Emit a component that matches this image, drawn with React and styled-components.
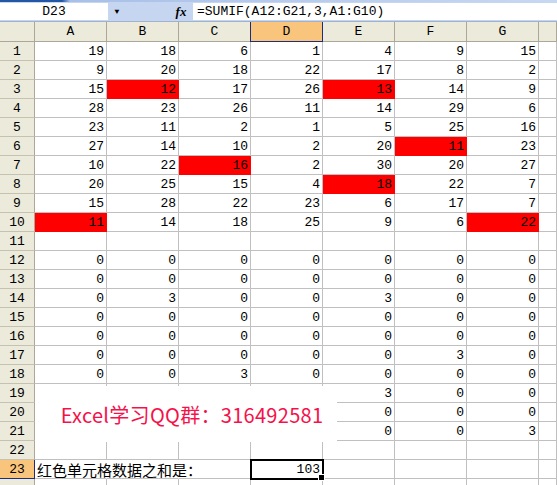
import React from 'react'
import styled, { createGlobalStyle } from 'styled-components'

const GlobalStyle = createGlobalStyle`
  html, body {
    margin: 0;
    padding: 0;
    background: #fff;
  }
  body {
    font-family: "Liberation Mono", "Noto Sans CJK SC", monospace;
    overflow: hidden;
  }
`

const COLS = ['A', 'B', 'C', 'D', 'E', 'F', 'G']

// rows 19-21 A:D sit under the banner, so only E:G are given
const DATA = {
  1: [19, 18, 6, 1, 4, 9, 15],
  2: [9, 20, 18, 22, 17, 8, 2],
  3: [15, 12, 17, 26, 13, 14, 9],
  4: [28, 23, 26, 11, 14, 29, 6],
  5: [23, 11, 2, 1, 5, 25, 16],
  6: [27, 14, 10, 2, 20, 11, 23],
  7: [10, 22, 16, 2, 30, 20, 27],
  8: [20, 25, 15, 4, 18, 22, 7],
  9: [15, 28, 22, 23, 6, 17, 7],
  10: [11, 14, 18, 25, 9, 6, 22],
  12: [0, 0, 0, 0, 0, 0, 0],
  13: [0, 0, 0, 0, 0, 0, 0],
  14: [0, 3, 0, 0, 3, 0, 0],
  15: [0, 0, 0, 0, 0, 0, 0],
  16: [0, 0, 0, 0, 0, 0, 0],
  17: [0, 0, 0, 0, 0, 3, 0],
  18: [0, 0, 3, 0, 0, 0, 0],
  19: ['', '', '', '', 3, 0, 0],
  20: ['', '', '', '', 0, 0, 0],
  21: ['', '', '', '', 0, 0, 3],
}

// cells filled red: "row-colIndex"
const RED = new Set(['3-1', '3-4', '6-5', '7-2', '8-4', '10-0', '10-6'])

const Page = styled.div`
  width: 557px;
  height: 485px;
  overflow: hidden;
  background: #fff;
`

const TopStrip = styled.div`
  height: 2px;
  background: linear-gradient(to right, #2456a6 0, #2456a6 62px, #a8c0e8 70px, #c9d8f1 100%);
`

const FormulaBar = styled.div`
  height: 20px;
  display: flex;
  align-items: stretch;
  background: #c6d6f0;
  border-bottom: 1px solid #9fb2d0;
  box-sizing: border-box;
  font-size: 13px;
  color: #000;
`

const NameBox = styled.div`
  width: 108px;
  background: #fff;
  display: flex;
  align-items: center;
  justify-content: center;
  margin-top: 1px;
  margin-bottom: 1px;
`

const DropArrow = styled.div`
  width: 18px;
  display: flex;
  align-items: center;
  justify-content: center;
  font-size: 8px;
  color: #000;
`

const Fx = styled.div`
  margin-left: auto;
  width: 24px;
  display: flex;
  align-items: center;
  justify-content: center;
  font-family: "Liberation Serif", serif;
  font-style: italic;
  font-weight: bold;
  font-size: 13px;
`

const FormulaInput = styled.div`
  width: 364px;
  background: #fff;
  display: flex;
  align-items: center;
  padding-left: 4px;
  box-sizing: border-box;
  margin-top: 1px;
  margin-bottom: 1px;
  font-size: 13px;
`

const Sheet = styled.div`
  position: relative;
  display: grid;
  grid-template-columns: 35px repeat(7, 72px) 1fr;
  grid-template-rows: 20px;
  grid-auto-rows: 19px;
`

const Corner = styled.div`
  background: #ebeadb;
  border-right: 1px solid #aca899;
  border-bottom: 1px solid #aca899;
`

const ColHead = styled.div`
  box-sizing: border-box;
  display: flex;
  align-items: center;
  justify-content: center;
  font-size: 13px;
  background: ${p => (p.$active ? '#f9c57c' : '#ebeadb')};
  border-right: 1px solid ${p => (p.$active ? '#1c2d7a' : '#aca899')};
  border-left: ${p => (p.$active ? '1px solid #1c2d7a' : 'none')};
  border-bottom: 1px solid ${p => (p.$active ? '#1c2d7a' : '#aca899')};
  margin-left: ${p => (p.$active ? '-1px' : '0')};
`

const RowHead = styled.div`
  box-sizing: border-box;
  display: flex;
  align-items: center;
  justify-content: center;
  font-size: 13px;
  background: ${p => (p.$active ? '#f9c57c' : '#ebeadb')};
  border-right: 1px solid ${p => (p.$active ? '#1c2d7a' : '#aca899')};
  border-bottom: 1px solid ${p => (p.$active ? '#1c2d7a' : '#c5c2b2')};
`

const Cell = styled.div`
  position: relative;
  box-sizing: border-box;
  display: flex;
  align-items: center;
  justify-content: ${p => (p.$left ? 'flex-start' : 'flex-end')};
  padding: ${p => (p.$left ? '0 0 0 2px' : '0 2px 0 0')};
  font-size: 13px;
  white-space: nowrap;
  overflow: visible;
  background: ${p => (p.$red ? '#ff0000' : '#fff')};
  border-right: 1px solid ${p => (p.$red ? '#ff0000' : p.$noRight ? 'transparent' : '#c0c0c0')};
  border-bottom: 1px solid ${p => (p.$red ? '#ff0000' : '#c0c0c0')};
  ${p => p.$selected && `
    outline: 2px solid #000;
    outline-offset: -1px;
    z-index: 2;
    &::after {
      content: '';
      position: absolute;
      right: -3px;
      bottom: -3px;
      width: 5px;
      height: 5px;
      background: #000;
      border: 1px solid #fff;
    }
  `}
`

const ChineseText = styled.span`
  font-family: "Noto Sans CJK SC", sans-serif;
  font-size: 15px;
  position: relative;
  z-index: 1;
`

const Banner = styled.div`
  position: absolute;
  left: 35px;
  top: 364px;
  width: 302px;
  height: 56px;
  background: #fff;
  display: flex;
  align-items: center;
  justify-content: center;
  padding-left: 12px;
  box-sizing: border-box;
  font-family: "Noto Sans CJK SC", sans-serif;
  font-size: 20px;
  color: #f5124a;
  letter-spacing: 0.3px;
  z-index: 3;
`

function App() {
  const rows = []
  for (let r = 1; r <= 24; r++) {
    const vals = DATA[r]
    rows.push(
      <RowHead key={`h${r}`} $active={r === 23}>{r < 24 ? r : ''}</RowHead>
    )
    COLS.forEach((c, ci) => {
      let content = vals ? vals[ci] : ''
      let props = {}
      if (r === 23) {
        if (ci === 0) {
          content = <ChineseText>红色单元格数据之和是：</ChineseText>
          props = { $left: true, $noRight: true }
        } else if (ci === 1 || ci === 2) {
          content = ''
          props = { $noRight: ci === 1 }
        } else if (ci === 3) {
          content = 103
          props = { $selected: true }
        } else {
          content = ''
        }
      }
      rows.push(
        <Cell key={`${r}-${c}`} $red={RED.has(`${r}-${ci}`)} {...props}>
          {content}
        </Cell>
      )
    })
    rows.push(<Cell key={`${r}-H`} />)
  }

  return (
    <Page>
      <GlobalStyle />
      <TopStrip />
      <FormulaBar>
        <NameBox>D23</NameBox>
        <DropArrow>▼</DropArrow>
        <Fx>fx</Fx>
        <FormulaInput>=SUMIF(A12:G21,3,A1:G10)</FormulaInput>
      </FormulaBar>
      <Sheet>
        <Corner />
        {COLS.map(c => (
          <ColHead key={c} $active={c === 'D'}>{c}</ColHead>
        ))}
        <ColHead />
        {rows}
        <Banner>Excel学习QQ群：316492581</Banner>
      </Sheet>
    </Page>
  )
}

export default App
